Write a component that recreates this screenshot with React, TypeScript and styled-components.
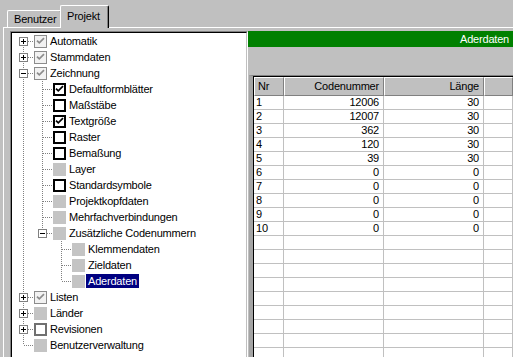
import React from "react";
import styled, { createGlobalStyle } from "styled-components";

type BoxKind = "grayCheck" | "check" | "empty" | "solid" | "grayEmpty";

interface TreeItem {
  label: string;
  box: BoxKind;
  toggle?: "plus" | "minus";
  selected?: boolean;
  children?: TreeItem[];
}

interface FlatRow {
  item: TreeItem;
  level: number;
  rails: boolean[];
  first: boolean;
  last: boolean;
}

const tree: TreeItem[] = [
  { label: "Automatik", box: "grayCheck", toggle: "plus" },
  { label: "Stammdaten", box: "grayCheck", toggle: "plus" },
  {
    label: "Zeichnung",
    box: "grayCheck",
    toggle: "minus",
    children: [
      { label: "Defaultformblätter", box: "check" },
      { label: "Maßstäbe", box: "empty" },
      { label: "Textgröße", box: "check" },
      { label: "Raster", box: "empty" },
      { label: "Bemaßung", box: "empty" },
      { label: "Layer", box: "solid" },
      { label: "Standardsymbole", box: "empty" },
      { label: "Projektkopfdaten", box: "solid" },
      { label: "Mehrfachverbindungen", box: "solid" },
      {
        label: "Zusätzliche Codenummern",
        box: "solid",
        toggle: "minus",
        children: [
          { label: "Klemmendaten", box: "solid" },
          { label: "Zieldaten", box: "solid" },
          { label: "Aderdaten", box: "solid", selected: true },
        ],
      },
    ],
  },
  { label: "Listen", box: "grayCheck", toggle: "plus" },
  { label: "Länder", box: "solid", toggle: "plus" },
  { label: "Revisionen", box: "grayEmpty", toggle: "plus" },
  { label: "Benutzerverwaltung", box: "solid" },
];

const rows: [string, string, string][] = [
  ["1", "12006", "30"],
  ["2", "12007", "30"],
  ["3", "362", "30"],
  ["4", "120", "30"],
  ["5", "39", "30"],
  ["6", "0", "0"],
  ["7", "0", "0"],
  ["8", "0", "0"],
  ["9", "0", "0"],
  ["10", "0", "0"],
];

function flatten(items: TreeItem[], level = 0, rails: boolean[] = [], out: FlatRow[] = []) {
  items.forEach((item, i) => {
    const last = i === items.length - 1;
    out.push({ item, level, rails, first: level === 0 && i === 0, last });
    if (item.children && item.toggle === "minus") {
      flatten(item.children, level + 1, [...rails, !last], out);
    }
  });
  return out;
}

const GlobalStyle = createGlobalStyle`
  html, body {
    margin: 0;
    padding: 0;
    background: #c0c0c0;
    overflow: hidden;
  }
  body {
    font-family: "Liberation Sans", Arial, sans-serif;
    font-size: 11px;
    letter-spacing: -0.2px;
    color: #000;
  }
`;

const Window = styled.div`
  width: 513px;
  height: 380px;
  padding: 5px 0 0 3px;
  box-sizing: border-box;
  display: flex;
  flex-direction: column;
`;

const TabStrip = styled.div`
  display: flex;
  align-items: flex-end;
  height: 22px;
  padding-left: 4px;
  position: relative;
  z-index: 1;
`;

const Tab = styled.div<{ $active?: boolean }>`
  box-sizing: border-box;
  width: ${p => (p.$active ? "49px" : "55px")};
  height: ${p => (p.$active ? "23px" : "17px")};
  margin-left: ${p => (p.$active ? "-2px" : "0")};
  margin-bottom: ${p => (p.$active ? "-1px" : "0")};
  padding: ${p => (p.$active ? "3px 0 0 6px" : "1px 0 0 6px")};
  line-height: 14px;
  background: #c0c0c0;
  border-top: 1px solid #fff;
  border-left: 1px solid #fff;
  border-right: 1px solid #000;
  border-top-left-radius: 2px;
  border-top-right-radius: 2px;
  box-shadow: inset -1px 0 #808080;
  z-index: ${p => (p.$active ? 2 : 1)};
`;

const TabPage = styled.div`
  flex: 1;
  display: flex;
  border-top: 1px solid #fff;
  border-left: 1px solid #fff;
  padding: 3px 0 0 6px;
  min-height: 0;
`;

const TreeFrame = styled.div`
  width: 238px;
  box-sizing: border-box;
  border-top: 1px solid #808080;
  border-left: 1px solid #808080;
  border-right: 1px solid #fff;
  border-bottom: 1px solid #fff;
  display: flex;
`;

const TreeBody = styled.div`
  flex: 1;
  background: #fff;
  border-top: 1px solid #000;
  border-left: 1px solid #000;
  border-right: 1px solid #c0c0c0;
  border-bottom: 1px solid #c0c0c0;
  padding-left: 3px;
  overflow: hidden;
`;

const TreeRow = styled.div`
  display: flex;
  align-items: center;
  height: 16px;
  white-space: nowrap;
`;

const Guide = styled.svg`
  flex: none;
  display: block;
  width: 19px;
  height: 16px;
`;

const Box = styled.span<{ $kind: BoxKind }>`
  flex: none;
  box-sizing: border-box;
  width: 13px;
  height: 13px;
  display: flex;
  align-items: center;
  justify-content: center;
  background: ${p =>
    p.$kind === "solid" ? "#c4c4c4" : p.$kind === "grayCheck" ? "#f2f2f2" : "#fff"};
  border: ${p =>
    p.$kind === "solid"
      ? "none"
      : p.$kind === "grayCheck"
      ? "1px solid #8c8c8c"
      : p.$kind === "grayEmpty"
      ? "2px solid #707070"
      : "2px solid #000"};
`;

const Label = styled.span<{ $selected?: boolean }>`
  margin-left: 1px;
  padding: 0 2px;
  line-height: 14px;
  height: 14px;
  background: ${p => (p.$selected ? "#000080" : "transparent")};
  color: ${p => (p.$selected ? "#fff" : "#000")};
`;

const RightPanel = styled.div`
  flex: 1;
  display: flex;
  flex-direction: column;
  min-width: 0;
`;

const Caption = styled.div`
  height: 16px;
  line-height: 16px;
  background: #008000;
  color: #fff;
  text-align: right;
  padding-right: 4px;
`;

const GridFrame = styled.div`
  flex: 1;
  margin: 28px 0 0 1px;
  border-top: 1px solid #808080;
  border-left: 4px solid #a4a4a4;
  display: flex;
  min-height: 0;
`;

const GridBody = styled.div`
  flex: 1;
  background: #fff;
  border-top: 1px solid #000;
  border-left: 1px solid #000;
  display: grid;
  grid-template-columns: 30px 100px 100px 1fr;
  grid-template-rows: 19px;
  grid-auto-rows: 14px;
  align-content: start;
  overflow: hidden;
`;

const HeadCell = styled.div<{ $right?: boolean }>`
  box-sizing: border-box;
  background: #c0c0c0;
  border-top: 1px solid #fff;
  border-left: 1px solid #fff;
  border-right: 1px solid #808080;
  border-bottom: 1px solid #808080;
  line-height: 16px;
  padding: ${p => (p.$right ? "0 4px 0 0" : "0 0 0 3px")};
  text-align: ${p => (p.$right ? "right" : "left")};
`;

const Cell = styled.div<{ $right?: boolean }>`
  box-sizing: border-box;
  border-right: 1px solid #c0c0c0;
  border-bottom: 1px solid #c0c0c0;
  line-height: 12px;
  padding: ${p => (p.$right ? "0 4px 0 0" : "0 0 0 2px")};
  text-align: ${p => (p.$right ? "right" : "left")};
`;

const LINE = "#808080";

function Rail({ on }: { on: boolean }) {
  return (
    <Guide viewBox="0 0 19 16">
      {on && <line x1={8.5} y1={0} x2={8.5} y2={16} stroke={LINE} strokeDasharray="1 1" />}
    </Guide>
  );
}

function Branch({ row }: { row: FlatRow }) {
  const t = row.item.toggle;
  return (
    <Guide viewBox="0 0 19 16" shapeRendering="crispEdges">
      {!row.first && <line x1={8.5} y1={0} x2={8.5} y2={8} stroke={LINE} strokeDasharray="1 1" />}
      {!row.last && <line x1={8.5} y1={8} x2={8.5} y2={16} stroke={LINE} strokeDasharray="1 1" />}
      <line x1={9} y1={8.5} x2={19} y2={8.5} stroke={LINE} strokeDasharray="1 1" />
      {t && (
        <>
          <rect x={4.5} y={4.5} width={8} height={8} fill="#fff" stroke={LINE} />
          <line x1={6} y1={8.5} x2={11} y2={8.5} stroke="#000" />
          {t === "plus" && <line x1={8.5} y1={6} x2={8.5} y2={11} stroke="#000" />}
        </>
      )}
    </Guide>
  );
}

function CheckBox({ kind }: { kind: BoxKind }) {
  const checked = kind === "check" || kind === "grayCheck";
  return (
    <Box $kind={kind}>
      {checked && (
        <svg width="9" height="9" viewBox="0 0 9 9">
          <path
            d="M1 3.6 L3.3 5.9 L8 1.2"
            fill="none"
            stroke={kind === "grayCheck" ? "#8c8c8c" : "#000"}
            strokeWidth={1.7}
          />
        </svg>
      )}
    </Box>
  );
}

export default function App() {
  const flat = flatten(tree);
  const empty = Array.from({ length: 12 });
  return (
    <Window>
      <GlobalStyle />
      <TabStrip>
        <Tab>Benutzer</Tab>
        <Tab $active>Projekt</Tab>
      </TabStrip>
      <TabPage>
        <TreeFrame>
          <TreeBody>
            {flat.map((row, i) => (
              <TreeRow key={i}>
                {row.rails.map((on, j) => (
                  <Rail key={j} on={on} />
                ))}
                <Branch row={row} />
                <CheckBox kind={row.item.box} />
                <Label $selected={row.item.selected}>{row.item.label}</Label>
              </TreeRow>
            ))}
          </TreeBody>
        </TreeFrame>
        <RightPanel>
          <Caption>Aderdaten</Caption>
          <GridFrame>
            <GridBody>
              <HeadCell>Nr</HeadCell>
              <HeadCell $right>Codenummer</HeadCell>
              <HeadCell $right>Länge</HeadCell>
              <HeadCell />
              {rows.map(([nr, code, len]) => (
                <React.Fragment key={nr}>
                  <Cell>{nr}</Cell>
                  <Cell $right>{code}</Cell>
                  <Cell $right>{len}</Cell>
                  <Cell />
                </React.Fragment>
              ))}
              {empty.map((_, i) => (
                <React.Fragment key={`e${i}`}>
                  <Cell />
                  <Cell />
                  <Cell />
                  <Cell />
                </React.Fragment>
              ))}
            </GridBody>
          </GridFrame>
        </RightPanel>
      </TabPage>
    </Window>
  );
}
